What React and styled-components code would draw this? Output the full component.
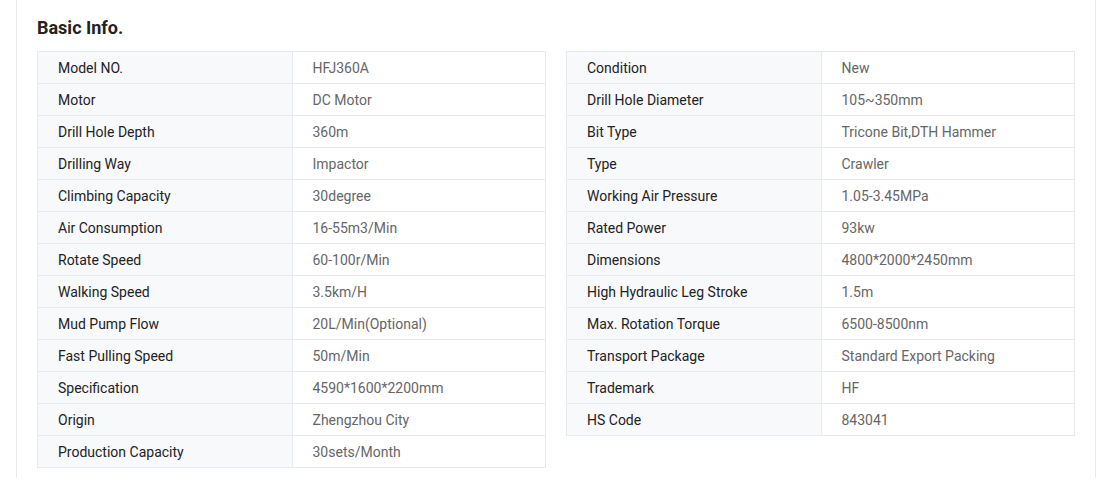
import styled, { createGlobalStyle } from 'styled-components';

const GlobalStyle = createGlobalStyle`
  body {
    margin: 0;
    background: #ffffff;
    font-family: Roboto, "Liberation Sans", Arial, sans-serif;
  }
`;

const left = [
  ['Model NO.', 'HFJ360A'],
  ['Motor', 'DC Motor'],
  ['Drill Hole Depth', '360m'],
  ['Drilling Way', 'Impactor'],
  ['Climbing Capacity', '30degree'],
  ['Air Consumption', '16-55m3/Min'],
  ['Rotate Speed', '60-100r/Min'],
  ['Walking Speed', '3.5km/H'],
  ['Mud Pump Flow', '20L/Min(Optional)'],
  ['Fast Pulling Speed', '50m/Min'],
  ['Specification', '4590*1600*2200mm'],
  ['Origin', 'Zhengzhou City'],
  ['Production Capacity', '30sets/Month'],
];

const right = [
  ['Condition', 'New'],
  ['Drill Hole Diameter', '105~350mm'],
  ['Bit Type', 'Tricone Bit,DTH Hammer'],
  ['Type', 'Crawler'],
  ['Working Air Pressure', '1.05-3.45MPa'],
  ['Rated Power', '93kw'],
  ['Dimensions', '4800*2000*2450mm'],
  ['High Hydraulic Leg Stroke', '1.5m'],
  ['Max. Rotation Torque', '6500-8500nm'],
  ['Transport Package', 'Standard Export Packing'],
  ['Trademark', 'HF'],
  ['HS Code', '843041'],
];

const Page = styled.div`
  padding: 0 14px 0 16px;
`;

const Card = styled.section`
  border-left: 1px solid #e8eaee;
  border-right: 1px solid #e8eaee;
  padding: 16px 20px 10px 20px;
  min-height: 478px;
  box-sizing: border-box;
`;

const Title = styled.h2`
  margin: 0 0 12px;
  font-size: 18px;
  line-height: 23px;
  font-weight: 700;
  color: #222222;
`;

const Columns = styled.div`
  display: grid;
  grid-template-columns: 1fr 1fr;
  gap: 20px;
  align-items: start;
`;

const Table = styled.div`
  border: 1px solid #e6e9ee;
  border-bottom: none;
`;

const Row = styled.div`
  display: grid;
  grid-template-columns: 1fr 1fr;
  height: 32px;
  border-bottom: 1px solid #e6e9ee;
  box-sizing: border-box;
`;

const Cell = styled.div`
  display: flex;
  align-items: center;
  padding: 0 20px;
  font-size: 14px;
  color: ${p => (p.$label ? '#222222' : '#666666')};
  background: ${p => (p.$label ? '#f8f9fb' : '#ffffff')};
  border-left: ${p => (p.$label ? 'none' : '1px solid #e6e9ee')};
  white-space: nowrap;
`;

const SpecTable = ({ rows }) => (
  <Table>
    {rows.map(([k, v]) => (
      <Row key={k}>
        <Cell $label>{k}</Cell>
        <Cell>{v}</Cell>
      </Row>
    ))}
  </Table>
);

export default function App() {
  return (
    <Page>
      <GlobalStyle />
      <Card>
        <Title>Basic Info.</Title>
        <Columns>
          <SpecTable rows={left} />
          <SpecTable rows={right} />
        </Columns>
      </Card>
    </Page>
  );
}
